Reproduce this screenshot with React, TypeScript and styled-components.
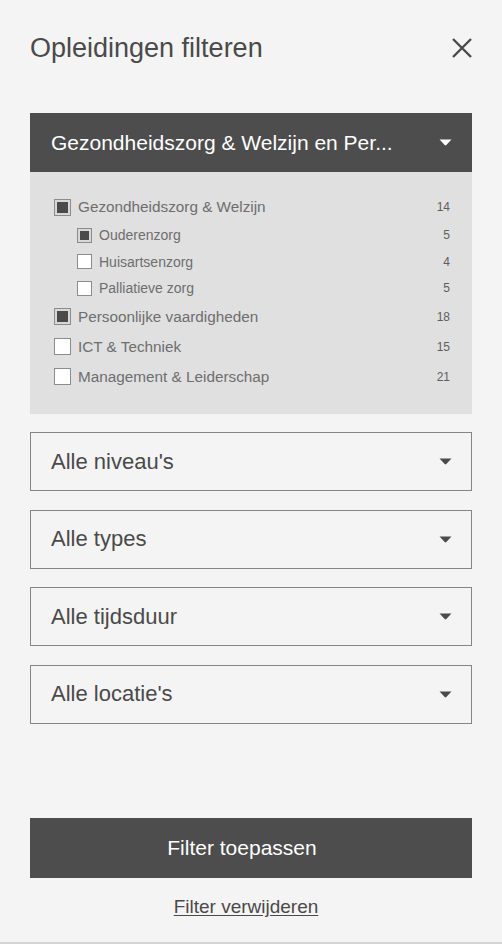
import React from "react";
import styled, { createGlobalStyle } from "styled-components";

const GlobalStyle = createGlobalStyle`
  html, body {
    margin: 0;
    padding: 0;
    background: #f4f4f4;
  }
  * {
    box-sizing: border-box;
  }
`;

const Panel = styled.div`
  width: 502px;
  min-height: 944px;
  background: #f4f4f4;
  border-bottom: 2px solid #d4d4d4;
  font-family: "Liberation Sans", Arial, sans-serif;
  padding: 30px 30px 24px;
  display: flex;
  flex-direction: column;
`;

const Header = styled.div`
  display: flex;
  align-items: center;
  justify-content: space-between;
  height: 36px;
  margin-bottom: 47px;
`;

const Title = styled.h2`
  margin: 0;
  font-size: 27px;
  font-weight: 400;
  color: #4a4a4a;
`;

const CloseButton = styled.button`
  background: none;
  border: none;
  padding: 0;
  margin-right: -1px;
  width: 22px;
  height: 22px;
  display: flex;
  align-items: center;
  justify-content: center;
  cursor: pointer;
`;

const Filters = styled.div`
  display: flex;
  flex-direction: column;
  gap: 18.5px;
`;

const Group = styled.div`
  display: flex;
  flex-direction: column;
`;

const Select = styled.div<{ $open?: boolean }>`
  height: 59px;
  display: flex;
  align-items: center;
  justify-content: space-between;
  padding: 0 19px 0 20px;
  font-size: ${(p) => (p.$open ? "21px" : "22px")};
  background: ${(p) => (p.$open ? "#4d4d4d" : "transparent")};
  color: ${(p) => (p.$open ? "#ffffff" : "#4a4a4a")};
  border: 1px solid ${(p) => (p.$open ? "#4d4d4d" : "#858585")};
  cursor: pointer;
`;

const Options = styled.ul`
  list-style: none;
  margin: 0;
  padding: 20px 22px 22px 24px;
  background: #e0e0e0;
`;

const Option = styled.li<{ $sub?: boolean }>`
  display: flex;
  align-items: center;
  height: ${(p) => (p.$sub ? "26.5px" : "30px")};
  padding-left: ${(p) => (p.$sub ? "23px" : "0")};
  font-size: ${(p) => (p.$sub ? "14px" : "15.3px")};
  color: #6e6e6e;
`;

const Box = styled.span<{ $checked?: boolean; $sub?: boolean }>`
  width: ${(p) => (p.$sub ? "15px" : "17px")};
  height: ${(p) => (p.$sub ? "15px" : "17px")};
  flex: none;
  border: 1px solid #8c8c8c;
  background: ${(p) => (p.$checked ? "#4a4a4a" : "#ffffff")};
  box-shadow: ${(p) => (p.$checked ? "inset 0 0 0 2px #d8d8d8" : "none")};
  margin-right: 7px;
`;

const Label = styled.span`
  flex: 1;
`;

const Count = styled.span`
  font-size: 12px;
  color: #5e5e5e;
  min-width: 20px;
  text-align: right;
`;

const Spacer = styled.div`
  flex: 1;
`;

const ApplyButton = styled.button`
  height: 60px;
  width: 100%;
  border: none;
  padding: 0 18px 0 0;
  background: #4d4d4d;
  color: #ffffff;
  font-family: inherit;
  font-size: 21px;
  cursor: pointer;
`;

const ClearLink = styled.a`
  align-self: center;
  margin: 18px 10px 0 0;
  font-size: 19px;
  color: #4a4a4a;
  text-decoration: underline;
  text-underline-offset: 2px;
  cursor: pointer;
`;

const Caret = ({ color }: { color: string }) => (
  <svg width="13" height="7" viewBox="0 0 13 7">
    <path d="M0.5 0.5 H12.5 L7.3 6 Q6.5 6.8 5.7 6 Z" fill={color} />
  </svg>
);

const CloseIcon = () => (
  <svg width="22" height="22" viewBox="0 0 22 22">
    <path
      d="M2 2 L20 20 M20 2 L2 20"
      stroke="#4a4a4a"
      strokeWidth="2.4"
      strokeLinecap="butt"
    />
  </svg>
);

type Item = { label: string; count: number; checked: boolean; sub?: boolean };

const items: Item[] = [
  { label: "Gezondheidszorg & Welzijn", count: 14, checked: true },
  { label: "Ouderenzorg", count: 5, checked: true, sub: true },
  { label: "Huisartsenzorg", count: 4, checked: false, sub: true },
  { label: "Palliatieve zorg", count: 5, checked: false, sub: true },
  { label: "Persoonlijke vaardigheden", count: 18, checked: true },
  { label: "ICT & Techniek", count: 15, checked: false },
  { label: "Management & Leiderschap", count: 21, checked: false },
];

const selects = ["Alle niveau's", "Alle types", "Alle tijdsduur", "Alle locatie's"];

export default function App() {
  return (
    <>
      <GlobalStyle />
      <Panel>
        <Header>
          <Title>Opleidingen filteren</Title>
          <CloseButton aria-label="Sluiten">
            <CloseIcon />
          </CloseButton>
        </Header>
        <Filters>
          <Group>
            <Select $open>
              <span>Gezondheidszorg &amp; Welzijn en Per...</span>
              <Caret color="#ffffff" />
            </Select>
            <Options>
              {items.map((item) => (
                <Option key={item.label} $sub={item.sub}>
                  <Box $checked={item.checked} $sub={item.sub} />
                  <Label>{item.label}</Label>
                  <Count>{item.count}</Count>
                </Option>
              ))}
            </Options>
          </Group>
          {selects.map((s) => (
            <Select key={s}>
              <span>{s}</span>
              <Caret color="#4a4a4a" />
            </Select>
          ))}
        </Filters>
        <Spacer />
        <ApplyButton>Filter toepassen</ApplyButton>
        <ClearLink>Filter verwijderen</ClearLink>
      </Panel>
    </>
  );
}
